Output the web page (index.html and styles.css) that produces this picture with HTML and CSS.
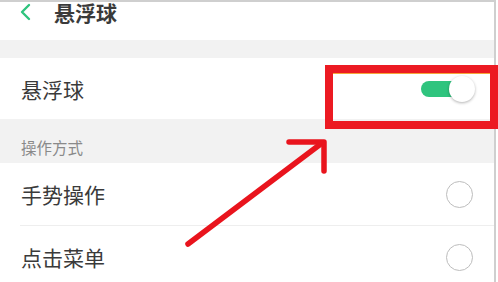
FILE: index.html
```html
<!DOCTYPE html>
<html lang="zh-CN">
<head>
    <meta charset="UTF-8">
    <title>悬浮球</title>
    <link rel="stylesheet" href="styles.css">
</head>
<body>
    <div class="screen">
        <div class="header">
            <svg class="back" width="14" height="18" viewBox="0 0 14 18">
                <polyline points="10,2 3,9 10,16" fill="none" stroke="#2fc47e" stroke-width="2.4" stroke-linecap="round" stroke-linejoin="round"/>
            </svg>
            <span class="title">悬浮球</span>
        </div>
        <div class="gap"></div>
        <div class="row row-main">
            <span class="label">悬浮球</span>
            <div class="switch"><div class="knob"></div></div>
        </div>
        <div class="section">操作方式</div>
        <div class="row row-line">
            <span class="label">手势操作</span>
            <span class="radio"></span>
        </div>
        <div class="row">
            <span class="label">点击菜单</span>
            <span class="radio"></span>
        </div>
    </div>

    <div class="mark"></div>
    <svg class="arrow" width="498" height="282" viewBox="0 0 498 282">
        <line x1="188" y1="244" x2="322" y2="143" stroke="#e9141d" stroke-width="5.5" stroke-linecap="round"/>
        <polyline points="289,142 324,142 324,171" fill="none" stroke="#e9141d" stroke-width="5.5" stroke-linecap="round" stroke-linejoin="round"/>
    </svg>
</body>
</html>
```

FILE: styles.css
```css
body {
    margin: 0;
    width: 498px;
    height: 282px;
    overflow: hidden;
    position: relative;
    font-family: "Noto Sans CJK SC", "Noto Sans", sans-serif;
    background: #fff;
}
.screen {
    width: 494px;
    height: 280px;
    border-top: 2px solid #cfcfcf;
    border-right: 2px solid #cfcfcf;
    background: #fff;
    overflow: hidden;
}
.header {
    height: 38px;
    display: flex;
    align-items: flex-start;
    padding-left: 19px;
}
.back {
    margin-top: 1px;
}
.title {
    margin-left: 21px;
    font-size: 21px;
    line-height: 22px;
    margin-top: -1px;
    font-weight: bold;
    color: #3a3a3a;
}
.gap {
    height: 18px;
    background: #f2f2f2;
}
.row {
    height: 62px;
    display: flex;
    align-items: center;
    justify-content: space-between;
    padding: 0 21px;
}
.row-main {
    height: 61px;
}
.row-line {
    border-bottom: 1px solid #eeeeee;
    margin-left: 20px;
    padding-left: 1px;
}
.label {
    font-size: 21px;
    color: #3a3a3a;
}
.section {
    height: 44px;
    background: #f2f2f2;
    padding-left: 21px;
    font-size: 15.5px;
    line-height: 56px;
    color: #8a8a8a;
}
.switch {
    width: 48px;
    height: 16px;
    margin-right: 4px;
    border-radius: 8px;
    background: #2fc47e;
    position: relative;
}
.knob {
    position: absolute;
    right: -6px;
    top: -5px;
    width: 26px;
    height: 26px;
    border-radius: 50%;
    background: #fff;
    box-shadow: 0 1px 3px rgba(0,0,0,0.3);
}
.radio {
    width: 25px;
    height: 25px;
    border: 1.5px solid #bdbdbd;
    border-radius: 50%;
}
.mark {
    position: absolute;
    left: 325px;
    top: 65px;
    width: 157px;
    height: 48px;
    border: 8px solid #ec1a22;
    box-shadow: inset 0 1px 0 #f6a537;
}
.arrow {
    position: absolute;
    left: 0;
    top: 0;
}
```
